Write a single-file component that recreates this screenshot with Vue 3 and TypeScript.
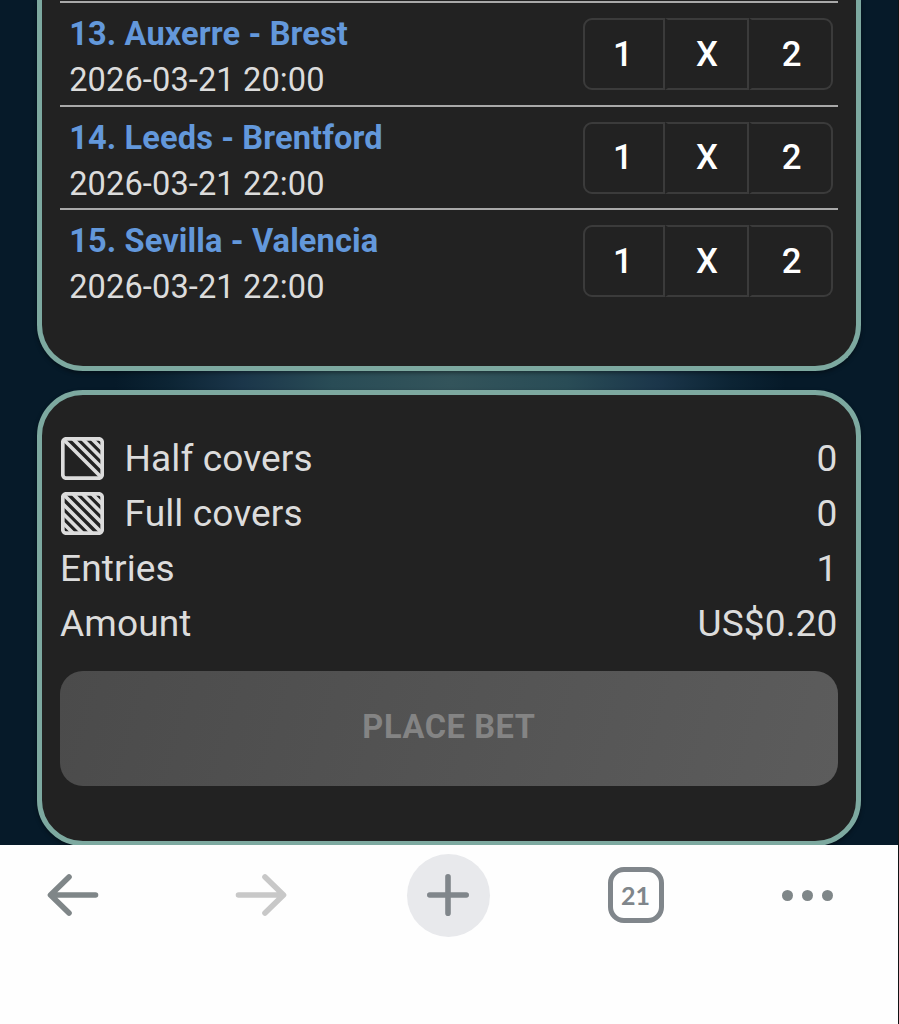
<script setup lang="ts">
interface Match {
  id: number
  teams: string
  kickoff: string
}

const matches: Match[] = [
  { id: 13, teams: 'Auxerre - Brest', kickoff: '2026-03-21 20:00' },
  { id: 14, teams: 'Leeds - Brentford', kickoff: '2026-03-21 22:00' },
  { id: 15, teams: 'Sevilla - Valencia', kickoff: '2026-03-21 22:00' },
]
const signs: string[] = ['1', 'X', '2']
</script>

<template>
  <div class="screen">
    <main class="page">
      <section class="card matches">
        <div v-for="m in matches" :key="m.id" class="match">
          <div class="info">
            <div class="teams">{{ m.id }}. {{ m.teams }}</div>
            <div class="kickoff">{{ m.kickoff }}</div>
          </div>
          <div class="signs">
            <button v-for="s in signs" :key="s" class="sign">{{ s }}</button>
          </div>
        </div>
      </section>

      <section class="card summary">
        <div class="line">
          <svg class="cover" viewBox="0 0 43 43">
            <rect x="1.8" y="1.8" width="39.4" height="39.4" rx="3.4" />
            <path d="M2 2L41 41M12 2L41 31M21.5 2L41 21.5M31 2L41 12" />
          </svg>
          <span class="label">Half covers</span>
          <span class="value">0</span>
        </div>
        <div class="line">
          <svg class="cover" viewBox="0 0 43 43">
            <rect x="1.8" y="1.8" width="39.4" height="39.4" rx="3.4" />
            <path d="M2 2L41 41M12 2L41 31M21.5 2L41 21.5M31 2L41 12M2 12L31 41M2 21.5L21.5 41M2 31L12 41" />
          </svg>
          <span class="label">Full covers</span>
          <span class="value">0</span>
        </div>
        <div class="line">
          <span class="label">Entries</span>
          <span class="value">1</span>
        </div>
        <div class="line">
          <span class="label">Amount</span>
          <span class="value">US$0.20</span>
        </div>
        <button class="place" disabled>PLACE BET</button>
      </section>
    </main>

    <nav class="toolbar">
      <svg class="arrow back" viewBox="0 0 52 44">
        <path d="M48.5 22H4M22 4L3.5 22L22 40" />
      </svg>
      <svg class="arrow forward" viewBox="0 0 52 44">
        <path d="M3.5 22H48M30 4L48.5 22L30 40" />
      </svg>
      <div class="new-tab">
        <svg viewBox="0 0 42 42"><path d="M21 2.8V39.2M2.8 21H39.2" /></svg>
      </div>
      <div class="tabs">21</div>
      <div class="more"><i /><i /><i /></div>
    </nav>
  </div>
</template>

<style>
body {
  margin: 0;
  background: #fff;
}
</style>

<style scoped>
.screen {
  box-sizing: border-box;
  width: 899px;
  height: 1024px;
  overflow: hidden;
  border-right: 1px solid #101214;
  background: #fefefe;
  font-family: Roboto, "Liberation Sans", sans-serif;
}
.page {
  box-sizing: border-box;
  height: 845px;
  padding: 0 37px;
  overflow: hidden;
  display: flex;
  flex-direction: column;
  gap: 19px;
  background: radial-gradient(ellipse 335px 500px at 450px 381px, #33545b 0%, #294c56 35%, #1b364a 62%, #0c2434 84%, #061a29 100%);
}
.card {
  box-sizing: border-box;
  flex: none;
  width: 824px;
  border: 5px solid #7da9a0;
  background: #222;
  padding: 0 18px;
  color: #dcdcdc;
  box-shadow: 0 2px 4px rgba(0, 0, 0, 0.4);
}
.matches {
  height: 371px;
  border-top: 0;
  border-radius: 0 0 46px 46px;
  padding-top: 1px;
}
.match {
  box-sizing: border-box;
  height: 103.6px;
  border-top: 2px solid #a9a9a9;
  padding: 8.2px 5px 0 9.2px;
  display: flex;
  justify-content: space-between;
}
.teams,
.kickoff {
  font-size: 32.6px;
  line-height: 46px;
  letter-spacing: 0.11px;
  white-space: nowrap;
}
.teams {
  font-weight: 700;
  color: #6398db;
}
.signs {
  display: flex;
  margin-top: 6.8px;
  height: 72px;
}
.sign {
  box-sizing: border-box;
  width: 83.5px;
  height: 72px;
  margin: 0;
  padding: 0;
  border: 2px solid #3b3b3b;
  background: transparent;
  color: #fff;
  font: 500 34.8px/1 Roboto, "Liberation Sans", sans-serif;
  letter-spacing: 0.4px;
}
.sign:first-child {
  width: 82px;
  padding-right: 2px;
  border-radius: 9px 0 0 9px;
}
.sign:last-child {
  width: 84.5px;
  padding-left: 1px;
  border-radius: 0 9px 9px 0;
}
.sign + .sign {
  border-left: 3px solid transparent;
}
.summary {
  height: 456px;
  border-radius: 46px;
  padding-top: 35.5px;
}
.line {
  display: flex;
  align-items: center;
  height: 55.3px;
  font-size: 37.1px;
  line-height: 55.3px;
  letter-spacing: 0.1px;
}
.line .value {
  padding-right: 0.5px;
}
.cover {
  flex: none;
  width: 43px;
  height: 43px;
  margin: 0 20.5px 0 1px;
  fill: none;
  stroke: #dcdcdc;
  stroke-width: 3.7;
}
.value {
  margin-left: auto;
}
.place {
  display: block;
  width: 778px;
  height: 115px;
  margin: 19.5px 0 0;
  padding: 0 0 3px;
  border: 0;
  border-radius: 23px;
  background: linear-gradient(105deg, #4b4b4b, #5c5c5c);
  color: #848484;
  font: 700 32.6px/1 Roboto, "Liberation Sans", sans-serif;
  letter-spacing: 0.6px;
}
.toolbar {
  display: grid;
  grid-template-columns: 146px 230px 144px 231px 112px;
  height: 82px;
  align-items: center;
  justify-items: center;
  margin-top: 8.5px;
}
.arrow {
  width: 52px;
  height: 44px;
  fill: none;
  stroke: #7f8688;
  stroke-width: 5.6;
  stroke-linecap: round;
  stroke-linejoin: round;
}
.forward {
  stroke: #c8c8c8;
}
.new-tab {
  display: grid;
  place-items: center;
  width: 83px;
  height: 83px;
  border-radius: 50%;
  background: #e8e9ec;
}
.new-tab svg {
  width: 42px;
  height: 42px;
  fill: none;
  stroke: #80868b;
  stroke-width: 5.6;
  stroke-linecap: round;
}
.tabs {
  box-sizing: border-box;
  width: 56px;
  height: 56px;
  border: 5px solid #80868b;
  border-radius: 16px;
  color: #80868b;
  font: 700 25px/46px Lato, "Liberation Sans", sans-serif;
  text-align: center;
}
.more {
  display: flex;
  gap: 9px;
}
.more i {
  width: 11px;
  height: 11px;
  border-radius: 50%;
  background: #7f8688;
}
</style>
